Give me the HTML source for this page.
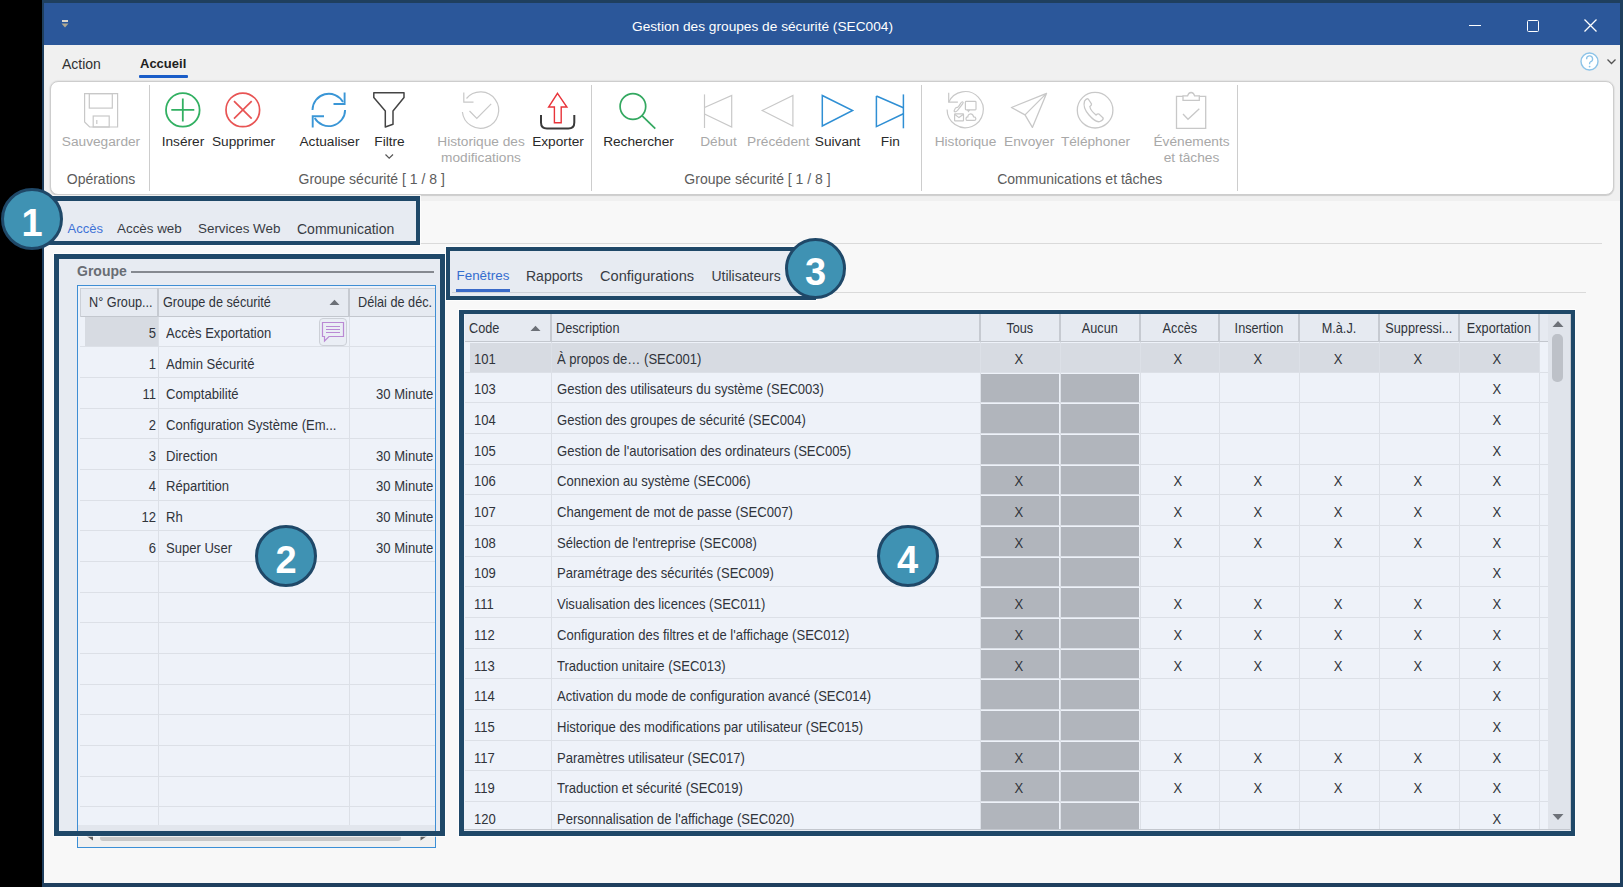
<!DOCTYPE html><html><head><meta charset="utf-8"><style>
*{box-sizing:border-box;margin:0;padding:0}
html,body{width:1623px;height:887px;overflow:hidden;background:#000;font-family:"Liberation Sans",sans-serif;}
.ab{position:absolute}
.t{position:absolute;white-space:nowrap;line-height:1}
.rl{position:absolute;font-size:13.7px;color:#2a2a2a;white-space:nowrap;text-align:center;line-height:16px}
.dis{color:#a8a8a8}
.gl{position:absolute;font-size:14px;color:#5c5c5c;white-space:nowrap;line-height:16px}
.sep{position:absolute;width:1px;background:#cdcdcd}
.tab{position:absolute;font-size:14px;color:#333;white-space:nowrap;line-height:16px}
.cell{position:absolute;font-size:13px;color:#262626;white-space:nowrap;line-height:16px}
.ann{position:absolute;border:5px solid #1f4868;background:rgba(100,140,200,0.11);box-shadow:0 0 0 1px rgba(255,255,255,0.7)}
.circ{position:absolute;border-radius:50%;background:#3f92b3;border:3.6px solid #1f4868;color:#fff;font-weight:bold;font-size:38px;text-align:center}
svg{position:absolute;overflow:visible}
</style></head><body>

<div class="ab" style="left:42px;top:0;width:1581px;height:887px;background:#1f3f5e"></div>
<div class="ab" style="left:44px;top:3px;width:1576px;height:880px;background:#f8f8f8"></div>
<div class="ab" style="left:44px;top:3px;width:1576px;height:42px;background:#2b579a"></div>
<div class="t" style="left:632px;top:20px;font-size:13.7px;color:#fff">Gestion des groupes de sécurité (SEC004)</div>
<div class="ab" style="left:62px;top:19.5px;width:6px;height:2px;background:#ddd8cc"></div>
<svg style="left:61px;top:22.5px" width="8" height="5"><path d="M0.5 0.5 L7.5 0.5 L4 4.5Z" fill="#b0a890"/></svg>
<div class="ab" style="left:1469px;top:25px;width:12px;height:1.3px;background:#fff"></div>
<div class="ab" style="left:1527px;top:20px;width:12px;height:12px;border:1.3px solid #fff;border-radius:1.5px"></div>
<svg style="left:1584px;top:19px" width="13" height="13"><path d="M0.5 0.5L12.5 12.5M12.5 0.5L0.5 12.5" stroke="#fff" stroke-width="1.3"/></svg>
<div class="ab" style="left:44px;top:45px;width:1576px;height:156px;background:#f0f0f0"></div>
<div class="t" style="left:62px;top:57px;font-size:14px;color:#303030">Action</div>
<div class="t" style="left:140px;top:57px;font-size:13px;font-weight:bold;color:#202020">Accueil</div>
<div class="ab" style="left:139px;top:75px;width:49px;height:2.5px;background:#1a5dc8;border-radius:1px"></div>
<svg style="left:1580px;top:52px" width="20" height="20"><circle cx="9.5" cy="9.5" r="8.5" fill="#fff" stroke="#8cc3e8" stroke-width="1.4"/><path d="M6.6 7.2 A3 3 0 1 1 10.5 9.8 Q9.6 10.3 9.6 11.6 L9.6 12.3" fill="none" stroke="#8cc3e8" stroke-width="1.3"/><circle cx="9.6" cy="14.6" r="0.9" fill="#8cc3e8"/></svg>
<svg style="left:1607px;top:59.2px" width="10" height="6"><path d="M0.5 0.5L4.5 4.5L8.5 0.5" fill="none" stroke="#555" stroke-width="1.3"/></svg>
<div class="ab" style="left:50px;top:81px;width:1564px;height:114px;background:#fff;border:1px solid #cdcdcd;border-radius:8px;box-shadow:0 0 1px 1px rgba(0,0,0,0.05),0 1px 1px rgba(0,0,0,0.10)"></div>
<div class="sep" style="left:149.0px;top:85px;height:106px"></div>
<div class="sep" style="left:591.0px;top:85px;height:106px"></div>
<div class="sep" style="left:920.8px;top:85px;height:106px"></div>
<div class="sep" style="left:1236.9px;top:85px;height:106px"></div>
<svg style="left:84px;top:93px" width="35" height="35"><g fill="none" stroke="#c8c8c8" stroke-width="1.2">
<path d="M0.6 0.6 H33.6 V34 H5.6 L0.6 29 Z"/><rect x="5.3" y="0.6" width="23" height="14.5"/><rect x="9.2" y="23" width="16" height="11"/><path d="M12.8 27 V31"/></g></svg>
<div class="rl dis" style="left:41px;top:134px;width:120px">Sauvegarder</div>
<svg style="left:164px;top:91px" width="38" height="38"><g fill="none" stroke="#32b062" stroke-width="1.8">
<circle cx="18.8" cy="18.9" r="16.8"/><path d="M7.3 18.9H30.3M18.8 7.4V30.4"/></g></svg>
<div class="rl" style="left:123px;top:134px;width:120px">Insérer</div>
<svg style="left:224px;top:91px" width="38" height="38"><g fill="none" stroke="#e85454" stroke-width="1.7">
<circle cx="18.8" cy="18.9" r="16.8"/><path d="M10 10.1L27.7 27.7M27.7 10.1L10 27.7"/></g></svg>
<div class="rl" style="left:183.5px;top:134px;width:120px">Supprimer</div>
<svg style="left:310px;top:91px" width="38" height="38"><g fill="none" stroke="#3a96d6" stroke-width="1.9">
<path d="M2.5 18.9 A16.3 16.3 0 0 1 33 11"/><path d="M34.6 1.5V13H23.5"/>
<path d="M35.1 18.9 A16.3 16.3 0 0 1 4.7 27"/><path d="M2.7 36.5V25.2H14"/></g></svg>
<div class="rl" style="left:269.5px;top:134px;width:120px">Actualiser</div>
<svg style="left:372px;top:91px" width="34" height="40"><path d="M1.8 1.7H32V6.5L21 19.9V33.2L13.3 36V19.9L1.8 6.5Z" fill="none" stroke="#444" stroke-width="1.5" stroke-linejoin="round"/></svg>
<div class="rl" style="left:329.5px;top:134px;width:120px">Filtre</div>
<svg style="left:385px;top:154px" width="9" height="6"><path d="M0.5 0.5L4.2 4.2L8 0.5" fill="none" stroke="#555" stroke-width="1.2"/></svg>
<svg style="left:460px;top:90px" width="40" height="40"><g fill="none" stroke="#c8c8c8" stroke-width="1.2">
<path d="M6.5 8.5 A18.2 18.2 0 1 1 2.4 22"/><path d="M3.8 2.5V12.2H13.5"/><path d="M9.5 21L16.8 28.3L31.2 13.8"/></g></svg>
<div class="rl dis" style="left:421px;top:134px;width:120px">Historique des</div>
<div class="rl dis" style="left:421px;top:150px;width:120px">modifications</div>
<svg style="left:539px;top:91px" width="38" height="40">
<path d="M18.5 2.3L27.9 16H22.2V31.7H15.4V16H9.6Z" fill="none" stroke="#e8343a" stroke-width="1.4" stroke-linejoin="miter"/>
<path d="M2 23.9V31.5Q2 37.5 8 37.5H29.3Q35.3 37.5 35.3 31.5V23.9" fill="none" stroke="#3a3a3a" stroke-width="2"/></svg>
<div class="rl" style="left:498px;top:134px;width:120px">Exporter</div>
<svg style="left:617px;top:91px" width="40" height="40"><g fill="none" stroke="#33a860" stroke-width="1.7">
<circle cx="15.9" cy="15.5" r="12.8"/><path d="M25.2 24.8L38.3 37.6"/></g></svg>
<div class="rl" style="left:578.5px;top:134px;width:120px">Rechercher</div>
<svg style="left:700px;top:92px" width="36" height="38"><g fill="none" stroke="#c8c8c8" stroke-width="1.2">
<path d="M4.5 2.4V36"/><path d="M4.5 15.5L31.7 3.5V35L4.5 22"/></g></svg>
<div class="rl dis" style="left:658.5px;top:134px;width:120px">Début</div>
<svg style="left:758px;top:92px" width="38" height="38"><path d="M4.2 18.5L34.9 3.5V34Z" fill="none" stroke="#c8c8c8" stroke-width="1.2" stroke-linejoin="miter"/></svg>
<div class="rl dis" style="left:718.3px;top:134px;width:120px">Précédent</div>
<svg style="left:818px;top:92px" width="38" height="38"><path d="M4.3 3.5L34.6 18.5L4.3 34Z" fill="none" stroke="#2f8fd4" stroke-width="1.5" stroke-linejoin="miter"/></svg>
<div class="rl" style="left:777.6px;top:134px;width:120px">Suivant</div>
<svg style="left:872px;top:92px" width="36" height="38"><g fill="none" stroke="#2f8fd4" stroke-width="1.5">
<path d="M4.4 4L31.4 15.7M31.4 21.8L4.4 34.6V4"/><path d="M31.4 2.4V36.3"/></g></svg>
<div class="rl" style="left:830.3px;top:134px;width:120px">Fin</div>
<svg style="left:945px;top:90px" width="42" height="42"><g fill="none" stroke="#c8c8c8" stroke-width="1.2">
<path d="M3.7 12.2 A18.1 18.1 0 1 1 2.1 19.6"/><path d="M3.7 2.8V12.2H12.9"/>
<rect x="20.4" y="11.4" width="10.6" height="8.4" rx="0.8"/><path d="M22.5 19.8L23.4 21.4L24.6 19.8"/>
<rect x="9.6" y="23.9" width="8.9" height="7" rx="0.5"/><path d="M9.6 24.2L14 27.6L18.5 24.2"/>
<path d="M21.5 30.4H29.2Q31 30.4 30.8 28.4Q30.5 26.6 28.6 26.8Q27.6 23.6 25 24Q22.8 24.5 22.8 26.8Q21 26.8 21 28.6Q21 30.4 21.5 30.4Z"/>
<path d="M9.5 20.2Q8.6 21.5 10 21.8Q11.2 21.8 12.6 20.4L17.6 13.8Q18.6 12 17.8 11.8Q16.8 11.5 15.6 13.3L13.5 16.6Q12.5 17.6 11.2 17.6Q10 18.3 9.5 20.2Z"/></g></svg>
<div class="rl dis" style="left:905.5px;top:134px;width:120px">Historique</div>
<svg style="left:1008px;top:90px" width="42" height="42"><path d="M38.5 3.4L3.4 17.5L17 24.9L24.4 37.4Z M38.5 3.4L17 24.9" fill="none" stroke="#c8c8c8" stroke-width="1.3" stroke-linejoin="round"/></svg>
<div class="rl dis" style="left:969.2px;top:134px;width:120px">Envoyer</div>
<svg style="left:1075px;top:90px" width="42" height="42"><g fill="none" stroke="#c8c8c8" stroke-width="1.3">
<circle cx="20.1" cy="20.2" r="17.8"/>
<path d="M9.5 11.2Q11.5 8 13.2 9L16.5 14Q16.6 15.5 14.8 16.5Q15.5 20.5 21 25Q22.5 23.5 24 24L28.2 28Q28.5 30 25 31.5Q21 33 14 25Q7.5 17.5 9.5 11.2Z"/></g></svg>
<div class="rl dis" style="left:1035.5px;top:134px;width:120px">Téléphoner</div>
<svg style="left:1174px;top:90px" width="36" height="42"><g fill="none" stroke="#c8c8c8" stroke-width="1.3">
<path d="M2.5 6.3H9V10.3H25.3V6.3H31.7V38.4H2.5Z"/><path d="M9 6.3V5.8H13.6Q14.5 2.5 17.1 2.5Q19.7 2.5 20.6 5.8H25.3V6.3"/>
<path d="M9 24L14 29.3L25.3 18.7"/></g></svg>
<div class="rl dis" style="left:1131.5px;top:134px;width:120px">Événements</div>
<div class="rl dis" style="left:1131.5px;top:150px;width:120px">et tâches</div>
<div class="gl" style="left:1px;top:171px;width:200px;text-align:center">Opérations</div>
<div class="gl" style="left:271.7px;top:171px;width:200px;text-align:center">Groupe sécurité [ 1 / 8 ]</div>
<div class="gl" style="left:657.5px;top:171px;width:200px;text-align:center">Groupe sécurité [ 1 / 8 ]</div>
<div class="gl" style="left:979.7px;top:171px;width:200px;text-align:center">Communications et tâches</div>
<div class="ab" style="left:60px;top:243px;width:1542px;height:1px;background:#dadada"></div>
<div class="tab" style="left:67.5px;top:221px;color:#3a70d8;font-size:13px">Accès</div>
<div class="ab" style="left:66px;top:241px;width:36px;height:2px;background:#3f72cc"></div>
<div class="tab" style="left:117px;top:221px;font-size:13.4px">Accès web</div>
<div class="tab" style="left:198px;top:221px;font-size:13.4px">Services Web</div>
<div class="tab" style="left:297px;top:221px">Communication</div>
<div class="t" style="left:77px;top:264px;font-size:14px;font-weight:bold;color:#6a6a6a">Groupe</div>
<div class="ab" style="left:131px;top:271px;width:303px;height:1.5px;background:#8a8a8a"></div>
<div class="ab" style="left:76.7px;top:285.2px;width:359.5px;height:563px;border:1.3px solid #3b8fd6;background:#fff"></div>
<div class="ab" style="left:79.5px;top:287.5px;width:355px;height:29.2px;background:#f7f7f7;border-top:1px solid #d9d9d9;border-bottom:1.5px solid #cfcfcf"></div>
<div class="ab" style="left:157.4px;top:288px;width:2px;height:28.5px;background:#d2d2d2"></div>
<div class="ab" style="left:348.3px;top:288px;width:2px;height:28.5px;background:#d2d2d2"></div>
<div class="ab" style="left:79.5px;top:287.5px;width:1px;height:29px;background:#d9d9d9"></div>
<div class="cell" style="left:89px;top:294.3px;font-size:14.5px;color:#2a2a2a;transform:scaleX(0.875);transform-origin:0 0">N° Group...</div>
<div class="cell" style="left:163.2px;top:294.3px;font-size:14.5px;color:#2a2a2a;transform:scaleX(0.875);transform-origin:0 0">Groupe de sécurité</div>
<div class="cell" style="left:358.4px;top:294.3px;font-size:14.5px;color:#2a2a2a;transform:scaleX(0.875);transform-origin:0 0">Délai de déc.</div>
<svg style="left:329px;top:299px" width="11" height="7"><path d="M0.5 6L5.5 0.8L10.5 6Z" fill="#6d6d6d"/></svg>
<div class="ab" style="left:85.4px;top:317.0px;width:73px;height:29.6px;background:#e6e6e6"></div>
<div class="ab" style="left:79.5px;top:346px;width:355px;height:1px;background:#ebebeb"></div>
<div class="ab" style="left:79.5px;top:377px;width:355px;height:1px;background:#ebebeb"></div>
<div class="ab" style="left:79.5px;top:408px;width:355px;height:1px;background:#ebebeb"></div>
<div class="ab" style="left:79.5px;top:438px;width:355px;height:1px;background:#ebebeb"></div>
<div class="ab" style="left:79.5px;top:469px;width:355px;height:1px;background:#ebebeb"></div>
<div class="ab" style="left:79.5px;top:500px;width:355px;height:1px;background:#ebebeb"></div>
<div class="ab" style="left:79.5px;top:530px;width:355px;height:1px;background:#ebebeb"></div>
<div class="ab" style="left:79.5px;top:561px;width:355px;height:1px;background:#ebebeb"></div>
<div class="ab" style="left:79.5px;top:592px;width:355px;height:1px;background:#ebebeb"></div>
<div class="ab" style="left:79.5px;top:622px;width:355px;height:1px;background:#ebebeb"></div>
<div class="ab" style="left:79.5px;top:653px;width:355px;height:1px;background:#ebebeb"></div>
<div class="ab" style="left:79.5px;top:684px;width:355px;height:1px;background:#ebebeb"></div>
<div class="ab" style="left:79.5px;top:714px;width:355px;height:1px;background:#ebebeb"></div>
<div class="ab" style="left:79.5px;top:745px;width:355px;height:1px;background:#ebebeb"></div>
<div class="ab" style="left:79.5px;top:776px;width:355px;height:1px;background:#ebebeb"></div>
<div class="ab" style="left:79.5px;top:806px;width:355px;height:1px;background:#ebebeb"></div>
<div class="ab" style="left:158px;top:316.7px;width:1px;height:509px;background:#ebebeb"></div>
<div class="ab" style="left:349px;top:316.7px;width:1px;height:509px;background:#ebebeb"></div>
<div class="cell" style="left:80px;top:325.09999999999997px;width:76px;text-align:right;font-size:14.5px;color:#2a2a2a;transform:scaleX(0.9);transform-origin:100% 0">5</div>
<div class="cell" style="left:166px;top:325.09999999999997px;font-size:14.5px;color:#2a2a2a;transform:scaleX(0.9);transform-origin:0 0">Accès Exportation</div>
<div class="cell" style="left:80px;top:355.77px;width:76px;text-align:right;font-size:14.5px;color:#2a2a2a;transform:scaleX(0.9);transform-origin:100% 0">1</div>
<div class="cell" style="left:166px;top:355.77px;font-size:14.5px;color:#2a2a2a;transform:scaleX(0.9);transform-origin:0 0">Admin Sécurité</div>
<div class="cell" style="left:80px;top:386.43999999999994px;width:76px;text-align:right;font-size:14.5px;color:#2a2a2a;transform:scaleX(0.9);transform-origin:100% 0">11</div>
<div class="cell" style="left:166px;top:386.43999999999994px;font-size:14.5px;color:#2a2a2a;transform:scaleX(0.9);transform-origin:0 0">Comptabilité</div>
<div class="cell" style="left:376px;top:386.43999999999994px;font-size:14.5px;color:#2a2a2a;transform:scaleX(0.9);transform-origin:0 0">30 Minute</div>
<div class="cell" style="left:80px;top:417.10999999999996px;width:76px;text-align:right;font-size:14.5px;color:#2a2a2a;transform:scaleX(0.9);transform-origin:100% 0">2</div>
<div class="cell" style="left:166px;top:417.10999999999996px;font-size:14.5px;color:#2a2a2a;transform:scaleX(0.9);transform-origin:0 0">Configuration Système (Em...</div>
<div class="cell" style="left:80px;top:447.78px;width:76px;text-align:right;font-size:14.5px;color:#2a2a2a;transform:scaleX(0.9);transform-origin:100% 0">3</div>
<div class="cell" style="left:166px;top:447.78px;font-size:14.5px;color:#2a2a2a;transform:scaleX(0.9);transform-origin:0 0">Direction</div>
<div class="cell" style="left:376px;top:447.78px;font-size:14.5px;color:#2a2a2a;transform:scaleX(0.9);transform-origin:0 0">30 Minute</div>
<div class="cell" style="left:80px;top:478.45px;width:76px;text-align:right;font-size:14.5px;color:#2a2a2a;transform:scaleX(0.9);transform-origin:100% 0">4</div>
<div class="cell" style="left:166px;top:478.45px;font-size:14.5px;color:#2a2a2a;transform:scaleX(0.9);transform-origin:0 0">Répartition</div>
<div class="cell" style="left:376px;top:478.45px;font-size:14.5px;color:#2a2a2a;transform:scaleX(0.9);transform-origin:0 0">30 Minute</div>
<div class="cell" style="left:80px;top:509.12px;width:76px;text-align:right;font-size:14.5px;color:#2a2a2a;transform:scaleX(0.9);transform-origin:100% 0">12</div>
<div class="cell" style="left:166px;top:509.12px;font-size:14.5px;color:#2a2a2a;transform:scaleX(0.9);transform-origin:0 0">Rh</div>
<div class="cell" style="left:376px;top:509.12px;font-size:14.5px;color:#2a2a2a;transform:scaleX(0.9);transform-origin:0 0">30 Minute</div>
<div class="cell" style="left:80px;top:539.79px;width:76px;text-align:right;font-size:14.5px;color:#2a2a2a;transform:scaleX(0.9);transform-origin:100% 0">6</div>
<div class="cell" style="left:166px;top:539.79px;font-size:14.5px;color:#2a2a2a;transform:scaleX(0.9);transform-origin:0 0">Super User</div>
<div class="cell" style="left:376px;top:539.79px;font-size:14.5px;color:#2a2a2a;transform:scaleX(0.9);transform-origin:0 0">30 Minute</div>
<div class="ab" style="left:318.6px;top:317.9px;width:28.3px;height:27.7px;background:#fbfbfb;border:1px solid #d9d9d9;border-radius:4px"></div>
<svg style="left:320px;top:320px" width="26" height="24"><g fill="none" stroke="#c58ad6" stroke-width="1.2">
<path d="M2.5 2.5H23.5V16.5H9L4.5 21V16.5H2.5Z"/><path d="M6 6.5H20M6 9.5H20M6 12.5H20"/></g></svg>
<div class="ab" style="left:78px;top:824.6px;width:357px;height:22.5px;background:#f0f0f0"></div>
<div class="ab" style="left:80px;top:824.6px;width:354px;height:5px;background:#f2f2f2"></div>
<div class="ab" style="left:100.4px;top:835px;width:301px;height:6px;background:#c8c8c8;border-radius:3px"></div>
<svg style="left:86px;top:831px" width="8" height="10"><path d="M7 0.5V9.5L0.5 5Z" fill="#606060"/></svg>
<svg style="left:420px;top:831px" width="8" height="10"><path d="M0.5 0.5V9.5L7 5Z" fill="#606060"/></svg>
<div class="ab" style="left:452px;top:291.5px;width:1134px;height:1px;background:#dadada"></div>
<div class="tab" style="left:456.5px;top:268px;color:#2f6ad0;font-size:13.4px">Fenêtres</div>
<div class="ab" style="left:456px;top:288.7px;width:54px;height:3px;background:#3567c8"></div>
<div class="tab" style="left:526px;top:268px">Rapports</div>
<div class="tab" style="left:600px;top:268px;font-size:14.6px">Configurations</div>
<div class="tab" style="left:711.4px;top:268px">Utilisateurs</div>
<div class="ab" style="left:462px;top:312px;width:1109px;height:518px;background:#fff;border:1px solid #cfcfcf"></div>
<div class="ab" style="left:464.5px;top:313.6px;width:1083.0px;height:28.4px;background:#f7f7f7;border-bottom:1.5px solid #cfcfcf"></div>
<div class="ab" style="left:549.8px;top:314px;width:2px;height:28px;background:#d2d2d2"></div>
<div class="ab" style="left:979.3px;top:314px;width:2px;height:28px;background:#d2d2d2"></div>
<div class="ab" style="left:1058.9px;top:314px;width:2px;height:28px;background:#d2d2d2"></div>
<div class="ab" style="left:1138.5px;top:314px;width:2px;height:28px;background:#d2d2d2"></div>
<div class="ab" style="left:1218.3px;top:314px;width:2px;height:28px;background:#d2d2d2"></div>
<div class="ab" style="left:1298.2px;top:314px;width:2px;height:28px;background:#d2d2d2"></div>
<div class="ab" style="left:1378.2px;top:314px;width:2px;height:28px;background:#d2d2d2"></div>
<div class="ab" style="left:1457.9px;top:314px;width:2px;height:28px;background:#d2d2d2"></div>
<div class="ab" style="left:1537.7px;top:314px;width:2px;height:28px;background:#d2d2d2"></div>
<div class="cell" style="left:469px;top:320.0px;font-size:14.5px;color:#2a2a2a;transform:scaleX(0.875);transform-origin:0 0">Code</div>
<svg style="left:530px;top:325px" width="11" height="7"><path d="M0.5 6L5.5 0.8L10.5 6Z" fill="#6d6d6d"/></svg>
<div class="cell" style="left:555.8px;top:320.0px;font-size:14.5px;color:#2a2a2a;transform:scaleX(0.875);transform-origin:0 0">Description</div>
<div class="cell" style="left:980.3px;top:320.0px;width:79.60000000000014px;text-align:center;font-size:14.5px;color:#2a2a2a;transform:scaleX(0.875);transform-origin:50% 0">Tous</div>
<div class="cell" style="left:1059.9px;top:320.0px;width:79.59999999999991px;text-align:center;font-size:14.5px;color:#2a2a2a;transform:scaleX(0.875);transform-origin:50% 0">Aucun</div>
<div class="cell" style="left:1139.5px;top:320.0px;width:79.79999999999995px;text-align:center;font-size:14.5px;color:#2a2a2a;transform:scaleX(0.875);transform-origin:50% 0">Accès</div>
<div class="cell" style="left:1219.3px;top:320.0px;width:79.90000000000009px;text-align:center;font-size:14.5px;color:#2a2a2a;transform:scaleX(0.875);transform-origin:50% 0">Insertion</div>
<div class="cell" style="left:1299.2px;top:320.0px;width:80.0px;text-align:center;font-size:14.5px;color:#2a2a2a;transform:scaleX(0.875);transform-origin:50% 0">M.à.J.</div>
<div class="cell" style="left:1379.2px;top:320.0px;width:79.70000000000005px;text-align:center;font-size:14.5px;color:#2a2a2a;transform:scaleX(0.875);transform-origin:50% 0">Suppressi...</div>
<div class="cell" style="left:1458.9px;top:320.0px;width:79.79999999999995px;text-align:center;font-size:14.5px;color:#2a2a2a;transform:scaleX(0.875);transform-origin:50% 0">Exportation</div>
<div class="ab" style="left:464.5px;top:342.0px;width:1083.0px;height:486.70000000000005px;overflow:hidden">
<div class="ab" style="left:5.899999999999977px;top:0.8px;width:1068.3000000000002px;height:29.5px;background:#e6e6e6"></div>
<div class="ab" style="left:0;top:30.00px;width:1083.0px;height:1px;background:#ebebeb"></div>
<div class="cell" style="left:9.399999999999977px;top:8.8px;font-size:14.5px;color:#2a2a2a;transform:scaleX(0.9);transform-origin:0 0">101</div>
<div class="cell" style="left:92.20000000000005px;top:8.8px;font-size:14.5px;color:#2a2a2a;transform:scaleX(0.9);transform-origin:0 0">À propos de… (SEC001)</div>
<div class="cell" style="left:514.3px;top:8.8px;width:79.60000000000014px;text-align:center;font-size:14.5px;color:#2a2a2a;transform:scaleX(0.9);transform-origin:50% 0">X</div>
<div class="cell" style="left:673.5px;top:8.8px;width:79.79999999999995px;text-align:center;font-size:14.5px;color:#2a2a2a;transform:scaleX(0.9);transform-origin:50% 0">X</div>
<div class="cell" style="left:753.3px;top:8.8px;width:79.90000000000009px;text-align:center;font-size:14.5px;color:#2a2a2a;transform:scaleX(0.9);transform-origin:50% 0">X</div>
<div class="cell" style="left:833.2px;top:8.8px;width:80.0px;text-align:center;font-size:14.5px;color:#2a2a2a;transform:scaleX(0.9);transform-origin:50% 0">X</div>
<div class="cell" style="left:913.2px;top:8.8px;width:79.70000000000005px;text-align:center;font-size:14.5px;color:#2a2a2a;transform:scaleX(0.9);transform-origin:50% 0">X</div>
<div class="cell" style="left:992.9000000000001px;top:8.8px;width:79.79999999999995px;text-align:center;font-size:14.5px;color:#2a2a2a;transform:scaleX(0.9);transform-origin:50% 0">X</div>
<div class="ab" style="left:516.6999999999999px;top:31.77px;width:77.80px;height:28.47px;background:#bbbbbb"></div>
<div class="ab" style="left:596.3000000000001px;top:31.77px;width:77.80px;height:28.47px;background:#bbbbbb"></div>
<div class="ab" style="left:0;top:60.00px;width:1083.0px;height:1px;background:#ebebeb"></div>
<div class="cell" style="left:9.399999999999977px;top:39.47px;font-size:14.5px;color:#2a2a2a;transform:scaleX(0.9);transform-origin:0 0">103</div>
<div class="cell" style="left:92.20000000000005px;top:39.47px;font-size:14.5px;color:#2a2a2a;transform:scaleX(0.9);transform-origin:0 0">Gestion des utilisateurs du système (SEC003)</div>
<div class="cell" style="left:992.9000000000001px;top:39.47px;width:79.79999999999995px;text-align:center;font-size:14.5px;color:#2a2a2a;transform:scaleX(0.9);transform-origin:50% 0">X</div>
<div class="ab" style="left:516.6999999999999px;top:62.44px;width:77.80px;height:28.47px;background:#bbbbbb"></div>
<div class="ab" style="left:596.3000000000001px;top:62.44px;width:77.80px;height:28.47px;background:#bbbbbb"></div>
<div class="ab" style="left:0;top:91.00px;width:1083.0px;height:1px;background:#ebebeb"></div>
<div class="cell" style="left:9.399999999999977px;top:70.14px;font-size:14.5px;color:#2a2a2a;transform:scaleX(0.9);transform-origin:0 0">104</div>
<div class="cell" style="left:92.20000000000005px;top:70.14px;font-size:14.5px;color:#2a2a2a;transform:scaleX(0.9);transform-origin:0 0">Gestion des groupes de sécurité (SEC004)</div>
<div class="cell" style="left:992.9000000000001px;top:70.14px;width:79.79999999999995px;text-align:center;font-size:14.5px;color:#2a2a2a;transform:scaleX(0.9);transform-origin:50% 0">X</div>
<div class="ab" style="left:516.6999999999999px;top:93.11px;width:77.80px;height:28.47px;background:#bbbbbb"></div>
<div class="ab" style="left:596.3000000000001px;top:93.11px;width:77.80px;height:28.47px;background:#bbbbbb"></div>
<div class="ab" style="left:0;top:122.00px;width:1083.0px;height:1px;background:#ebebeb"></div>
<div class="cell" style="left:9.399999999999977px;top:100.81px;font-size:14.5px;color:#2a2a2a;transform:scaleX(0.9);transform-origin:0 0">105</div>
<div class="cell" style="left:92.20000000000005px;top:100.81px;font-size:14.5px;color:#2a2a2a;transform:scaleX(0.9);transform-origin:0 0">Gestion de l'autorisation des ordinateurs (SEC005)</div>
<div class="cell" style="left:992.9000000000001px;top:100.81px;width:79.79999999999995px;text-align:center;font-size:14.5px;color:#2a2a2a;transform:scaleX(0.9);transform-origin:50% 0">X</div>
<div class="ab" style="left:516.6999999999999px;top:123.78px;width:77.80px;height:28.47px;background:#bbbbbb"></div>
<div class="ab" style="left:596.3000000000001px;top:123.78px;width:77.80px;height:28.47px;background:#bbbbbb"></div>
<div class="ab" style="left:0;top:152.00px;width:1083.0px;height:1px;background:#ebebeb"></div>
<div class="cell" style="left:9.399999999999977px;top:131.48000000000002px;font-size:14.5px;color:#2a2a2a;transform:scaleX(0.9);transform-origin:0 0">106</div>
<div class="cell" style="left:92.20000000000005px;top:131.48000000000002px;font-size:14.5px;color:#2a2a2a;transform:scaleX(0.9);transform-origin:0 0">Connexion au système (SEC006)</div>
<div class="cell" style="left:514.3px;top:131.48000000000002px;width:79.60000000000014px;text-align:center;font-size:14.5px;color:#2a2a2a;transform:scaleX(0.9);transform-origin:50% 0">X</div>
<div class="cell" style="left:673.5px;top:131.48000000000002px;width:79.79999999999995px;text-align:center;font-size:14.5px;color:#2a2a2a;transform:scaleX(0.9);transform-origin:50% 0">X</div>
<div class="cell" style="left:753.3px;top:131.48000000000002px;width:79.90000000000009px;text-align:center;font-size:14.5px;color:#2a2a2a;transform:scaleX(0.9);transform-origin:50% 0">X</div>
<div class="cell" style="left:833.2px;top:131.48000000000002px;width:80.0px;text-align:center;font-size:14.5px;color:#2a2a2a;transform:scaleX(0.9);transform-origin:50% 0">X</div>
<div class="cell" style="left:913.2px;top:131.48000000000002px;width:79.70000000000005px;text-align:center;font-size:14.5px;color:#2a2a2a;transform:scaleX(0.9);transform-origin:50% 0">X</div>
<div class="cell" style="left:992.9000000000001px;top:131.48000000000002px;width:79.79999999999995px;text-align:center;font-size:14.5px;color:#2a2a2a;transform:scaleX(0.9);transform-origin:50% 0">X</div>
<div class="ab" style="left:516.6999999999999px;top:154.45px;width:77.80px;height:28.47px;background:#bbbbbb"></div>
<div class="ab" style="left:596.3000000000001px;top:154.45px;width:77.80px;height:28.47px;background:#bbbbbb"></div>
<div class="ab" style="left:0;top:183.00px;width:1083.0px;height:1px;background:#ebebeb"></div>
<div class="cell" style="left:9.399999999999977px;top:162.15000000000003px;font-size:14.5px;color:#2a2a2a;transform:scaleX(0.9);transform-origin:0 0">107</div>
<div class="cell" style="left:92.20000000000005px;top:162.15000000000003px;font-size:14.5px;color:#2a2a2a;transform:scaleX(0.9);transform-origin:0 0">Changement de mot de passe (SEC007)</div>
<div class="cell" style="left:514.3px;top:162.15000000000003px;width:79.60000000000014px;text-align:center;font-size:14.5px;color:#2a2a2a;transform:scaleX(0.9);transform-origin:50% 0">X</div>
<div class="cell" style="left:673.5px;top:162.15000000000003px;width:79.79999999999995px;text-align:center;font-size:14.5px;color:#2a2a2a;transform:scaleX(0.9);transform-origin:50% 0">X</div>
<div class="cell" style="left:753.3px;top:162.15000000000003px;width:79.90000000000009px;text-align:center;font-size:14.5px;color:#2a2a2a;transform:scaleX(0.9);transform-origin:50% 0">X</div>
<div class="cell" style="left:833.2px;top:162.15000000000003px;width:80.0px;text-align:center;font-size:14.5px;color:#2a2a2a;transform:scaleX(0.9);transform-origin:50% 0">X</div>
<div class="cell" style="left:913.2px;top:162.15000000000003px;width:79.70000000000005px;text-align:center;font-size:14.5px;color:#2a2a2a;transform:scaleX(0.9);transform-origin:50% 0">X</div>
<div class="cell" style="left:992.9000000000001px;top:162.15000000000003px;width:79.79999999999995px;text-align:center;font-size:14.5px;color:#2a2a2a;transform:scaleX(0.9);transform-origin:50% 0">X</div>
<div class="ab" style="left:516.6999999999999px;top:185.12px;width:77.80px;height:28.47px;background:#bbbbbb"></div>
<div class="ab" style="left:596.3000000000001px;top:185.12px;width:77.80px;height:28.47px;background:#bbbbbb"></div>
<div class="ab" style="left:0;top:214.00px;width:1083.0px;height:1px;background:#ebebeb"></div>
<div class="cell" style="left:9.399999999999977px;top:192.82000000000002px;font-size:14.5px;color:#2a2a2a;transform:scaleX(0.9);transform-origin:0 0">108</div>
<div class="cell" style="left:92.20000000000005px;top:192.82000000000002px;font-size:14.5px;color:#2a2a2a;transform:scaleX(0.9);transform-origin:0 0">Sélection de l'entreprise (SEC008)</div>
<div class="cell" style="left:514.3px;top:192.82000000000002px;width:79.60000000000014px;text-align:center;font-size:14.5px;color:#2a2a2a;transform:scaleX(0.9);transform-origin:50% 0">X</div>
<div class="cell" style="left:673.5px;top:192.82000000000002px;width:79.79999999999995px;text-align:center;font-size:14.5px;color:#2a2a2a;transform:scaleX(0.9);transform-origin:50% 0">X</div>
<div class="cell" style="left:753.3px;top:192.82000000000002px;width:79.90000000000009px;text-align:center;font-size:14.5px;color:#2a2a2a;transform:scaleX(0.9);transform-origin:50% 0">X</div>
<div class="cell" style="left:833.2px;top:192.82000000000002px;width:80.0px;text-align:center;font-size:14.5px;color:#2a2a2a;transform:scaleX(0.9);transform-origin:50% 0">X</div>
<div class="cell" style="left:913.2px;top:192.82000000000002px;width:79.70000000000005px;text-align:center;font-size:14.5px;color:#2a2a2a;transform:scaleX(0.9);transform-origin:50% 0">X</div>
<div class="cell" style="left:992.9000000000001px;top:192.82000000000002px;width:79.79999999999995px;text-align:center;font-size:14.5px;color:#2a2a2a;transform:scaleX(0.9);transform-origin:50% 0">X</div>
<div class="ab" style="left:516.6999999999999px;top:215.79px;width:77.80px;height:28.47px;background:#bbbbbb"></div>
<div class="ab" style="left:596.3000000000001px;top:215.79px;width:77.80px;height:28.47px;background:#bbbbbb"></div>
<div class="ab" style="left:0;top:244.00px;width:1083.0px;height:1px;background:#ebebeb"></div>
<div class="cell" style="left:9.399999999999977px;top:223.49px;font-size:14.5px;color:#2a2a2a;transform:scaleX(0.9);transform-origin:0 0">109</div>
<div class="cell" style="left:92.20000000000005px;top:223.49px;font-size:14.5px;color:#2a2a2a;transform:scaleX(0.9);transform-origin:0 0">Paramétrage des sécurités (SEC009)</div>
<div class="cell" style="left:992.9000000000001px;top:223.49px;width:79.79999999999995px;text-align:center;font-size:14.5px;color:#2a2a2a;transform:scaleX(0.9);transform-origin:50% 0">X</div>
<div class="ab" style="left:516.6999999999999px;top:246.46px;width:77.80px;height:28.47px;background:#bbbbbb"></div>
<div class="ab" style="left:596.3000000000001px;top:246.46px;width:77.80px;height:28.47px;background:#bbbbbb"></div>
<div class="ab" style="left:0;top:275.00px;width:1083.0px;height:1px;background:#ebebeb"></div>
<div class="cell" style="left:9.399999999999977px;top:254.16000000000003px;font-size:14.5px;color:#2a2a2a;transform:scaleX(0.9);transform-origin:0 0">111</div>
<div class="cell" style="left:92.20000000000005px;top:254.16000000000003px;font-size:14.5px;color:#2a2a2a;transform:scaleX(0.9);transform-origin:0 0">Visualisation des licences (SEC011)</div>
<div class="cell" style="left:514.3px;top:254.16000000000003px;width:79.60000000000014px;text-align:center;font-size:14.5px;color:#2a2a2a;transform:scaleX(0.9);transform-origin:50% 0">X</div>
<div class="cell" style="left:673.5px;top:254.16000000000003px;width:79.79999999999995px;text-align:center;font-size:14.5px;color:#2a2a2a;transform:scaleX(0.9);transform-origin:50% 0">X</div>
<div class="cell" style="left:753.3px;top:254.16000000000003px;width:79.90000000000009px;text-align:center;font-size:14.5px;color:#2a2a2a;transform:scaleX(0.9);transform-origin:50% 0">X</div>
<div class="cell" style="left:833.2px;top:254.16000000000003px;width:80.0px;text-align:center;font-size:14.5px;color:#2a2a2a;transform:scaleX(0.9);transform-origin:50% 0">X</div>
<div class="cell" style="left:913.2px;top:254.16000000000003px;width:79.70000000000005px;text-align:center;font-size:14.5px;color:#2a2a2a;transform:scaleX(0.9);transform-origin:50% 0">X</div>
<div class="cell" style="left:992.9000000000001px;top:254.16000000000003px;width:79.79999999999995px;text-align:center;font-size:14.5px;color:#2a2a2a;transform:scaleX(0.9);transform-origin:50% 0">X</div>
<div class="ab" style="left:516.6999999999999px;top:277.13px;width:77.80px;height:28.47px;background:#bbbbbb"></div>
<div class="ab" style="left:596.3000000000001px;top:277.13px;width:77.80px;height:28.47px;background:#bbbbbb"></div>
<div class="ab" style="left:0;top:306.00px;width:1083.0px;height:1px;background:#ebebeb"></div>
<div class="cell" style="left:9.399999999999977px;top:284.83000000000004px;font-size:14.5px;color:#2a2a2a;transform:scaleX(0.9);transform-origin:0 0">112</div>
<div class="cell" style="left:92.20000000000005px;top:284.83000000000004px;font-size:14.5px;color:#2a2a2a;transform:scaleX(0.9);transform-origin:0 0">Configuration des filtres et de l'affichage (SEC012)</div>
<div class="cell" style="left:514.3px;top:284.83000000000004px;width:79.60000000000014px;text-align:center;font-size:14.5px;color:#2a2a2a;transform:scaleX(0.9);transform-origin:50% 0">X</div>
<div class="cell" style="left:673.5px;top:284.83000000000004px;width:79.79999999999995px;text-align:center;font-size:14.5px;color:#2a2a2a;transform:scaleX(0.9);transform-origin:50% 0">X</div>
<div class="cell" style="left:753.3px;top:284.83000000000004px;width:79.90000000000009px;text-align:center;font-size:14.5px;color:#2a2a2a;transform:scaleX(0.9);transform-origin:50% 0">X</div>
<div class="cell" style="left:833.2px;top:284.83000000000004px;width:80.0px;text-align:center;font-size:14.5px;color:#2a2a2a;transform:scaleX(0.9);transform-origin:50% 0">X</div>
<div class="cell" style="left:913.2px;top:284.83000000000004px;width:79.70000000000005px;text-align:center;font-size:14.5px;color:#2a2a2a;transform:scaleX(0.9);transform-origin:50% 0">X</div>
<div class="cell" style="left:992.9000000000001px;top:284.83000000000004px;width:79.79999999999995px;text-align:center;font-size:14.5px;color:#2a2a2a;transform:scaleX(0.9);transform-origin:50% 0">X</div>
<div class="ab" style="left:516.6999999999999px;top:307.80px;width:77.80px;height:28.47px;background:#bbbbbb"></div>
<div class="ab" style="left:596.3000000000001px;top:307.80px;width:77.80px;height:28.47px;background:#bbbbbb"></div>
<div class="ab" style="left:0;top:336.00px;width:1083.0px;height:1px;background:#ebebeb"></div>
<div class="cell" style="left:9.399999999999977px;top:315.50000000000006px;font-size:14.5px;color:#2a2a2a;transform:scaleX(0.9);transform-origin:0 0">113</div>
<div class="cell" style="left:92.20000000000005px;top:315.50000000000006px;font-size:14.5px;color:#2a2a2a;transform:scaleX(0.9);transform-origin:0 0">Traduction unitaire (SEC013)</div>
<div class="cell" style="left:514.3px;top:315.50000000000006px;width:79.60000000000014px;text-align:center;font-size:14.5px;color:#2a2a2a;transform:scaleX(0.9);transform-origin:50% 0">X</div>
<div class="cell" style="left:673.5px;top:315.50000000000006px;width:79.79999999999995px;text-align:center;font-size:14.5px;color:#2a2a2a;transform:scaleX(0.9);transform-origin:50% 0">X</div>
<div class="cell" style="left:753.3px;top:315.50000000000006px;width:79.90000000000009px;text-align:center;font-size:14.5px;color:#2a2a2a;transform:scaleX(0.9);transform-origin:50% 0">X</div>
<div class="cell" style="left:833.2px;top:315.50000000000006px;width:80.0px;text-align:center;font-size:14.5px;color:#2a2a2a;transform:scaleX(0.9);transform-origin:50% 0">X</div>
<div class="cell" style="left:913.2px;top:315.50000000000006px;width:79.70000000000005px;text-align:center;font-size:14.5px;color:#2a2a2a;transform:scaleX(0.9);transform-origin:50% 0">X</div>
<div class="cell" style="left:992.9000000000001px;top:315.50000000000006px;width:79.79999999999995px;text-align:center;font-size:14.5px;color:#2a2a2a;transform:scaleX(0.9);transform-origin:50% 0">X</div>
<div class="ab" style="left:516.6999999999999px;top:338.47px;width:77.80px;height:28.47px;background:#bbbbbb"></div>
<div class="ab" style="left:596.3000000000001px;top:338.47px;width:77.80px;height:28.47px;background:#bbbbbb"></div>
<div class="ab" style="left:0;top:367.00px;width:1083.0px;height:1px;background:#ebebeb"></div>
<div class="cell" style="left:9.399999999999977px;top:346.17px;font-size:14.5px;color:#2a2a2a;transform:scaleX(0.9);transform-origin:0 0">114</div>
<div class="cell" style="left:92.20000000000005px;top:346.17px;font-size:14.5px;color:#2a2a2a;transform:scaleX(0.9);transform-origin:0 0">Activation du mode de configuration avancé (SEC014)</div>
<div class="cell" style="left:992.9000000000001px;top:346.17px;width:79.79999999999995px;text-align:center;font-size:14.5px;color:#2a2a2a;transform:scaleX(0.9);transform-origin:50% 0">X</div>
<div class="ab" style="left:516.6999999999999px;top:369.14px;width:77.80px;height:28.47px;background:#bbbbbb"></div>
<div class="ab" style="left:596.3000000000001px;top:369.14px;width:77.80px;height:28.47px;background:#bbbbbb"></div>
<div class="ab" style="left:0;top:398.00px;width:1083.0px;height:1px;background:#ebebeb"></div>
<div class="cell" style="left:9.399999999999977px;top:376.84000000000003px;font-size:14.5px;color:#2a2a2a;transform:scaleX(0.9);transform-origin:0 0">115</div>
<div class="cell" style="left:92.20000000000005px;top:376.84000000000003px;font-size:14.5px;color:#2a2a2a;transform:scaleX(0.9);transform-origin:0 0">Historique des modifications par utilisateur (SEC015)</div>
<div class="cell" style="left:992.9000000000001px;top:376.84000000000003px;width:79.79999999999995px;text-align:center;font-size:14.5px;color:#2a2a2a;transform:scaleX(0.9);transform-origin:50% 0">X</div>
<div class="ab" style="left:516.6999999999999px;top:399.81px;width:77.80px;height:28.47px;background:#bbbbbb"></div>
<div class="ab" style="left:596.3000000000001px;top:399.81px;width:77.80px;height:28.47px;background:#bbbbbb"></div>
<div class="ab" style="left:0;top:428.00px;width:1083.0px;height:1px;background:#ebebeb"></div>
<div class="cell" style="left:9.399999999999977px;top:407.51000000000005px;font-size:14.5px;color:#2a2a2a;transform:scaleX(0.9);transform-origin:0 0">117</div>
<div class="cell" style="left:92.20000000000005px;top:407.51000000000005px;font-size:14.5px;color:#2a2a2a;transform:scaleX(0.9);transform-origin:0 0">Paramètres utilisateur (SEC017)</div>
<div class="cell" style="left:514.3px;top:407.51000000000005px;width:79.60000000000014px;text-align:center;font-size:14.5px;color:#2a2a2a;transform:scaleX(0.9);transform-origin:50% 0">X</div>
<div class="cell" style="left:673.5px;top:407.51000000000005px;width:79.79999999999995px;text-align:center;font-size:14.5px;color:#2a2a2a;transform:scaleX(0.9);transform-origin:50% 0">X</div>
<div class="cell" style="left:753.3px;top:407.51000000000005px;width:79.90000000000009px;text-align:center;font-size:14.5px;color:#2a2a2a;transform:scaleX(0.9);transform-origin:50% 0">X</div>
<div class="cell" style="left:833.2px;top:407.51000000000005px;width:80.0px;text-align:center;font-size:14.5px;color:#2a2a2a;transform:scaleX(0.9);transform-origin:50% 0">X</div>
<div class="cell" style="left:913.2px;top:407.51000000000005px;width:79.70000000000005px;text-align:center;font-size:14.5px;color:#2a2a2a;transform:scaleX(0.9);transform-origin:50% 0">X</div>
<div class="cell" style="left:992.9000000000001px;top:407.51000000000005px;width:79.79999999999995px;text-align:center;font-size:14.5px;color:#2a2a2a;transform:scaleX(0.9);transform-origin:50% 0">X</div>
<div class="ab" style="left:516.6999999999999px;top:430.48px;width:77.80px;height:28.47px;background:#bbbbbb"></div>
<div class="ab" style="left:596.3000000000001px;top:430.48px;width:77.80px;height:28.47px;background:#bbbbbb"></div>
<div class="ab" style="left:0;top:459.00px;width:1083.0px;height:1px;background:#ebebeb"></div>
<div class="cell" style="left:9.399999999999977px;top:438.18px;font-size:14.5px;color:#2a2a2a;transform:scaleX(0.9);transform-origin:0 0">119</div>
<div class="cell" style="left:92.20000000000005px;top:438.18px;font-size:14.5px;color:#2a2a2a;transform:scaleX(0.9);transform-origin:0 0">Traduction et sécurité (SEC019)</div>
<div class="cell" style="left:514.3px;top:438.18px;width:79.60000000000014px;text-align:center;font-size:14.5px;color:#2a2a2a;transform:scaleX(0.9);transform-origin:50% 0">X</div>
<div class="cell" style="left:673.5px;top:438.18px;width:79.79999999999995px;text-align:center;font-size:14.5px;color:#2a2a2a;transform:scaleX(0.9);transform-origin:50% 0">X</div>
<div class="cell" style="left:753.3px;top:438.18px;width:79.90000000000009px;text-align:center;font-size:14.5px;color:#2a2a2a;transform:scaleX(0.9);transform-origin:50% 0">X</div>
<div class="cell" style="left:833.2px;top:438.18px;width:80.0px;text-align:center;font-size:14.5px;color:#2a2a2a;transform:scaleX(0.9);transform-origin:50% 0">X</div>
<div class="cell" style="left:913.2px;top:438.18px;width:79.70000000000005px;text-align:center;font-size:14.5px;color:#2a2a2a;transform:scaleX(0.9);transform-origin:50% 0">X</div>
<div class="cell" style="left:992.9000000000001px;top:438.18px;width:79.79999999999995px;text-align:center;font-size:14.5px;color:#2a2a2a;transform:scaleX(0.9);transform-origin:50% 0">X</div>
<div class="ab" style="left:516.6999999999999px;top:461.15px;width:77.80px;height:28.47px;background:#bbbbbb"></div>
<div class="ab" style="left:596.3000000000001px;top:461.15px;width:77.80px;height:28.47px;background:#bbbbbb"></div>
<div class="ab" style="left:0;top:490.00px;width:1083.0px;height:1px;background:#ebebeb"></div>
<div class="cell" style="left:9.399999999999977px;top:468.85px;font-size:14.5px;color:#2a2a2a;transform:scaleX(0.9);transform-origin:0 0">120</div>
<div class="cell" style="left:92.20000000000005px;top:468.85px;font-size:14.5px;color:#2a2a2a;transform:scaleX(0.9);transform-origin:0 0">Personnalisation de l'affichage (SEC020)</div>
<div class="cell" style="left:992.9000000000001px;top:468.85px;width:79.79999999999995px;text-align:center;font-size:14.5px;color:#2a2a2a;transform:scaleX(0.9);transform-origin:50% 0">X</div>
<div class="ab" style="left:86.50px;top:0;width:1px;height:500px;background:#ebebeb"></div>
<div class="ab" style="left:515.50px;top:0;width:1px;height:500px;background:#ebebeb"></div>
<div class="ab" style="left:595.50px;top:0;width:1px;height:500px;background:#ebebeb"></div>
<div class="ab" style="left:675.50px;top:0;width:1px;height:500px;background:#ebebeb"></div>
<div class="ab" style="left:754.50px;top:0;width:1px;height:500px;background:#ebebeb"></div>
<div class="ab" style="left:834.50px;top:0;width:1px;height:500px;background:#ebebeb"></div>
<div class="ab" style="left:914.50px;top:0;width:1px;height:500px;background:#ebebeb"></div>
<div class="ab" style="left:994.50px;top:0;width:1px;height:500px;background:#ebebeb"></div>
<div class="ab" style="left:1074.50px;top:0;width:1px;height:500px;background:#ebebeb"></div>
</div>
<div class="ab" style="left:1547.5px;top:313.6px;width:22.5px;height:515px;background:#f0f0f0"></div>
<svg style="left:1551.5px;top:320px" width="12" height="8"><path d="M0.5 7L6 1L11.5 7Z" fill="#707070"/></svg>
<svg style="left:1551.5px;top:813px" width="12" height="8"><path d="M0.5 1L6 7L11.5 1Z" fill="#707070"/></svg>
<div class="ab" style="left:1552.2px;top:333.9px;width:10.7px;height:48px;background:#c8c8c8;border-radius:5px"></div>
<div class="ann" style="left:40px;top:196px;width:380px;height:49px;border-width:5px 4px 4px 4px"></div>
<div class="ann" style="left:54px;top:254px;width:391px;height:582px;border-width:5px"></div>
<div class="ann" style="left:446px;top:247px;width:370px;height:53px;border-width:4px"></div>
<div class="ann" style="left:459px;top:310px;width:1116px;height:526px;border-width:4px 4px 5px 5px"></div>
<div class="circ" style="left:1.0px;top:188.3px;width:62px;height:62px;line-height:54px;padding-top:5px">1</div>
<div class="circ" style="left:255.2px;top:525.2px;width:62px;height:62px;line-height:54px;padding-top:5px">2</div>
<div class="circ" style="left:784.85px;top:238.04999999999998px;width:61.3px;height:61.3px;line-height:53.3px;padding-top:5px">3</div>
<div class="circ" style="left:876.5px;top:525.4px;width:62px;height:62px;line-height:54px;padding-top:5px">4</div>
</body></html>
